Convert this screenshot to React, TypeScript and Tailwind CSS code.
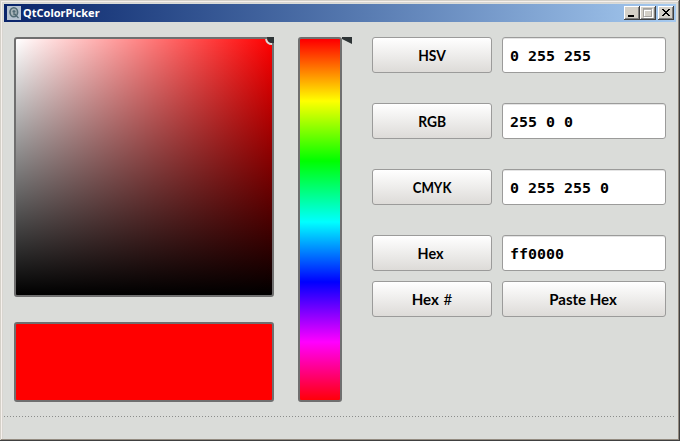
import React from "react";

function WindowButton({ kind }: { kind: "min" | "max" | "close" }) {
  return (
    <div className={`flex h-[14px] w-4 shrink-0 bg-[#d4d0c8] shadow-[inset_-1px_-1px_#404040,inset_1px_1px_#ffffff,inset_-2px_-2px_#808080] ${kind === "close" ? "ml-0.5" : ""}`}>
      <svg width="16" height="14" viewBox="0 0 16 14" shapeRendering="crispEdges">
        {kind === "min" && <rect x="4" y="9" width="6" height="2" fill="#000" />}
        {kind === "max" && (
          <>
            <path d="M4 3h9v9H4zM5 5v6h7V5z" fill="#fff" fillRule="evenodd" />
            <path d="M3 2h9v9H3zM4 4v6h7V4z" fill="#808080" fillOpacity=".6" fillRule="evenodd" />
          </>
        )}
        {kind === "close" && (
          <path d="M4 3h2v1h1v1h2v-1h1v-1h2v1h-1v1h-1v1h-1v1h1v1h1v1h1v1h-2v-1h-1v-1h-2v1h-1v1h-2v-1h1v-1h1v-1h1v-1h-1v-1h-1v-1h-1z" fill="#000" />
        )}
      </svg>
    </div>
  );
}

function PushButton({ label, textClass }: { label: string; textClass: string }) {
  return (
    <button className="flex h-9 items-center justify-center rounded-[3px] border border-[#9b9b9a] bg-linear-to-b from-white to-[#dddbd8] text-black">
      <span className={`whitespace-pre font-['Lato','Noto_Sans',sans-serif] text-[15px] leading-5 font-bold ${textClass}`}>
        {label.split("#")[0]}
        {label.includes("#") && <span className="ml-px font-normal">#</span>}
      </span>
    </button>
  );
}

function Field({ value }: { value: string }) {
  return (
    <div className="flex h-9 items-center rounded-[3px] border border-[#9b9b9a] bg-white pt-0.5 pl-[7px] font-['DejaVu_Sans_Mono',monospace] text-[13.5px] font-bold text-black shadow-[inset_0_1px_#e4e4e4]">
      <span className="origin-left scale-x-[1.108] whitespace-pre">{value}</span>
    </div>
  );
}

const rows = [
  { label: "HSV", value: "0 255 255", text: "scale-x-[0.92]" },
  { label: "RGB", value: "255 0 0", text: "scale-x-[0.92]" },
  { label: "CMYK", value: "0 255 255 0", text: "scale-x-[0.88]" },
  { label: "Hex", value: "ff0000", text: "-translate-x-px scale-x-[0.96]" },
];

export default function App() {
  return (
    <div className="flex h-[441px] w-[680px] flex-col overflow-hidden bg-[#dadcd9] px-1 pt-1 shadow-[inset_-1px_-1px_#404040,inset_1px_1px_#d4d0c8,inset_-2px_-2px_#938b80,inset_2px_2px_#f5f0ec,inset_3px_3px_#d8d5d0]">
      <header className="flex h-[18px] shrink-0 items-center bg-linear-to-r from-[#0a246a] to-[#a6caf0] pr-0.5 pl-[3px]">
        <svg width="14" height="14" viewBox="0 0 14 14">
          <rect width="14" height="14" fill="#b6c2d0" />
          <ellipse cx="6.8" cy="6.3" rx="3.8" ry="4.5" fill="#a9b4b9" stroke="#526b75" strokeWidth="1.6" />
          <path d="M7 4v4.5h2M5.5 5.5h3M8.5 9l3 3" fill="none" stroke="#526b75" strokeWidth="1.3" />
        </svg>
        <span className="ml-0.5 flex-1 font-['Noto_Sans',sans-serif] text-[11px] leading-[18px] font-bold text-white">QtColorPicker</span>
        <div className="flex">
          <WindowButton kind="min" />
          <WindowButton kind="max" />
          <WindowButton kind="close" />
        </div>
      </header>
      <main className="flex h-[380px] shrink-0 pt-[15px] pl-2.5">
        <div className="flex w-[260px] shrink-0 flex-col gap-[25px]">
          <div className="relative h-[260px] rounded-[3px] border-2 border-[#6f6f6f] bg-[linear-gradient(to_bottom,transparent,black),linear-gradient(to_right,white,red)] bg-origin-padding">
            <svg className="absolute -top-0.5 -right-0.5" width="10" height="10" viewBox="0 0 10 10">
              <path d="M2 2Q3 7 8 7" fill="none" stroke="#dadcd9" strokeWidth="2" />
              <path d="M3 0h7v6H7Q3 5 3 0z" fill="#2e3436" />
            </svg>
          </div>
          <div className="h-20 rounded-[3px] border-2 border-[#6f6f6f] bg-[#ff0000]" />
        </div>
        <div className="ml-6 flex h-[365px] shrink-0">
          <div className="w-11 rounded-[3px] border-2 border-[#6f6f6f] bg-[linear-gradient(to_bottom,#ff0000_1px,#ffff00_62px,#00ff00_122px,#00ffff_183px,#0000ff_243px,#ff00ff_303px,#ff0008_361px)]" />
          <svg width="10" height="7" viewBox="0 0 10 7"><path d="M0 0h10v7L0 2z" fill="#2e3436" /></svg>
        </div>
        <div className="ml-5 flex w-[294px] shrink-0 flex-col">
          <div className="flex flex-col gap-[30px]">
            {rows.map((row) => (
              <div className="grid grid-cols-[120px_164px] gap-2.5" key={row.label}>
                <PushButton label={row.label} textClass={row.text} />
                <Field value={row.value} />
              </div>
            ))}
          </div>
          <div className="mt-2.5 grid grid-cols-[120px_164px] gap-2.5">
            <PushButton label="Hex #" textClass="" />
            <PushButton label="Paste Hex" textClass="-translate-x-px" />
          </div>
        </div>
      </main>
      <div className="mt-[14px] h-px w-[670px] shrink-0 bg-[repeating-linear-gradient(to_right,#8b8d8b_0px,#8b8d8b_1px,transparent_1px,transparent_3px)]" />
    </div>
  );
}
